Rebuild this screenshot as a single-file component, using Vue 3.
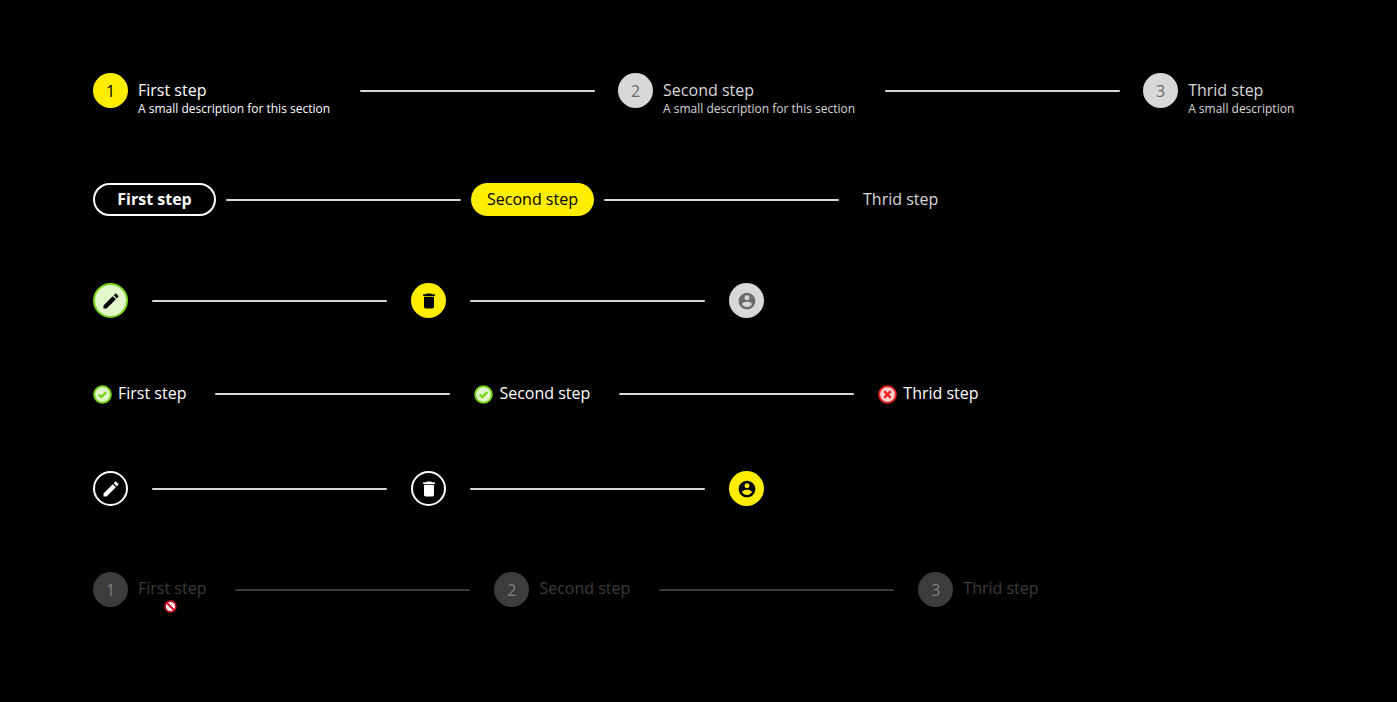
<script setup>
const icons = {
  edit: 'M3 17.25V21h3.75L17.81 9.94l-3.75-3.75L3 17.25zM20.71 7.04a1 1 0 0 0 0-1.41l-2.34-2.34a1 1 0 0 0-1.41 0l-1.83 1.83 3.75 3.75 1.83-1.83z',
  trash: 'M6 19c0 1.1.9 2 2 2h8c1.1 0 2-.9 2-2V7H6v12zM19 4h-3.5l-1-1h-5l-1 1H5v2h14V4z',
  account: 'M12 2C6.48 2 2 6.48 2 12s4.48 10 10 10 10-4.48 10-10S17.52 2 12 2zm0 3c1.66 0 3 1.34 3 3s-1.34 3-3 3-3-1.34-3-3 1.34-3 3-3zm0 14.2c-2.5 0-4.71-1.28-6-3.22.03-1.99 4-3.08 6-3.08 1.99 0 5.97 1.09 6 3.08-1.29 1.94-3.5 3.22-6 3.22z',
}

const steppers = [
  {
    kind: 'described',
    steps: [
      { number: 1, label: 'First step', text: 'A small description for this section', state: 'active' },
      { number: 2, label: 'Second step', text: 'A small description for this section', state: 'idle' },
      { number: 3, label: 'Thrid step', text: 'A small description', state: 'idle' },
    ],
  },
  {
    kind: 'pills',
    steps: [
      { label: 'First step', state: 'visited' },
      { label: 'Second step', state: 'active' },
      { label: 'Thrid step', state: 'idle' },
    ],
  },
  {
    kind: 'icons',
    steps: [
      { icon: 'edit', name: 'Edit', state: 'success' },
      { icon: 'trash', name: 'Delete', state: 'active' },
      { icon: 'account', name: 'Account', state: 'idle' },
    ],
  },
  {
    kind: 'status',
    steps: [
      { status: 'ok', label: 'First step', state: 'done' },
      { status: 'ok', label: 'Second step', state: 'done' },
      { status: 'error', label: 'Thrid step', state: 'done' },
    ],
  },
  {
    kind: 'icons',
    steps: [
      { icon: 'edit', name: 'Edit', state: 'visited' },
      { icon: 'trash', name: 'Delete', state: 'visited' },
      { icon: 'account', name: 'Account', state: 'active' },
    ],
  },
  {
    kind: 'disabled',
    steps: [
      { number: 1, label: 'First step', state: 'off', blocked: true },
      { number: 2, label: 'Second step', state: 'off' },
      { number: 3, label: 'Thrid step', state: 'off' },
    ],
  },
]
</script>

<template>
  <main class="board">
    <ol v-for="(stepper, row) in steppers" :key="row" class="stepper" :class="stepper.kind">
      <li v-for="(step, i) in stepper.steps" :key="i" class="item">
        <span v-if="i > 0" class="line"></span>
        <div class="step" :class="step.state">
          <span v-if="step.number" class="circle">{{ step.number }}</span>
          <span v-if="step.icon" class="circle">
            <svg class="glyph" viewBox="0 0 24 24" role="img" :aria-label="step.name">
              <path :d="icons[step.icon]" />
            </svg>
          </span>
          <svg v-if="step.status === 'ok'" class="badge" viewBox="0 0 19 19" aria-hidden="true">
            <circle cx="9.5" cy="9.5" r="8.3" fill="#e2f5cb" stroke="#78d51c" stroke-width="2" />
            <path d="M5.7 9.5l2.6 2.6 5-5" fill="none" stroke="#78d51c" stroke-width="2.4" />
          </svg>
          <svg v-if="step.status === 'error'" class="badge" viewBox="0 0 19 19" aria-hidden="true">
            <circle cx="9.5" cy="9.5" r="8.3" fill="#fbd3d3" stroke="#f02525" stroke-width="2" />
            <path d="M6.2 6.2l6.6 6.6M12.8 6.2l-6.6 6.6" fill="none" stroke="#f02525" stroke-width="2.6" />
          </svg>
          <div v-if="step.label" class="texts">
            <span class="label">{{ step.label }}</span>
            <span v-if="step.text" class="text">{{ step.text }}</span>
          </div>
          <svg v-if="step.blocked" class="blocked" viewBox="0 0 13 13" aria-hidden="true">
            <circle cx="6.5" cy="6.5" r="5.4" fill="#fff" stroke="#d0021b" stroke-width="1.6" />
            <path d="M3 3l7 7" stroke="#d0021b" stroke-width="1.8" />
          </svg>
        </div>
      </li>
    </ol>
  </main>
</template>

<style>
html,
body {
  margin: 0;
  background: #000;
}
</style>

<style scoped>
.board {
  display: flex;
  flex-direction: column;
  gap: 66px;
  box-sizing: border-box;
  min-height: 100vh;
  padding: 73px 32px 73px 93px;
  background: #000;
  color: #fff;
  font-family: 'Open Sans', 'Noto Sans', sans-serif;
  font-size: 16px;
  line-height: 20px;
}

.stepper {
  display: flex;
  margin: 0;
  padding: 0;
  list-style: none;
}

.item {
  display: flex;
  flex: 0 1 auto;
  align-items: flex-start;
}

.line {
  flex: 0 1 235px;
  width: 235px;
  min-width: 24px;
  height: 2px;
  margin: 17px 24px 0;
  border-radius: 1px;
  background: #d8d8d8;
}

.step {
  position: relative;
  display: flex;
  flex: none;
  align-items: flex-start;
  gap: 10px;
}

.circle {
  display: flex;
  align-items: center;
  justify-content: center;
  box-sizing: border-box;
  width: 35px;
  height: 35px;
  border-radius: 50%;
  background: #d8d8d8;
  color: #6b6b6b;
}

.glyph {
  width: 20px;
  height: 20px;
  fill: currentColor;
}

.active .circle {
  background: #ffed00;
  color: #000;
}

.success .circle {
  border: 2px solid #78d51c;
  background: #e2f5cb;
  color: #000;
}

.visited .circle {
  border: 2px solid #fff;
  background: #000;
  color: #fff;
}

.texts {
  display: flex;
  flex-direction: column;
}

.label,
.text {
  white-space: nowrap;
}

.text {
  font-size: 12px;
  line-height: 18px;
}

.idle .texts {
  color: #d8d8d8;
}

.described {
  height: 44px;
}

.described .texts {
  padding-top: 7px;
}

.described .line {
  margin: 17px 23px 0 30px;
}

.pills {
  min-height: 34px;
}

.pills .line {
  margin: 16px 10px 0;
}

.pills .texts {
  box-sizing: border-box;
  align-items: center;
  min-width: 123px;
  padding: 6px 14px 7px;
  border-radius: 17px;
}

.pills .idle .texts {
  align-items: flex-start;
}

.pills .visited .texts {
  padding: 4px 12px 5px;
  border: 2px solid #fff;
  font-weight: 700;
}

.pills .active .texts {
  background: #ffed00;
  color: #000;
}

.status .step {
  gap: 6px;
}

.status .label {
  line-height: 18px;
}

.status .line {
  margin: 9px 24px 0 29px;
}

.badge {
  width: 19px;
  height: 21px;
}

.disabled .texts {
  padding-top: 6px;
  color: #3c3c3c;
}

.disabled .circle {
  background: #3c3c3c;
  color: #808080;
}

.disabled .line {
  margin-left: 29px;
  background: #3c3c3c;
}

.blocked {
  position: absolute;
  top: 28px;
  left: 71px;
  width: 13px;
  height: 13px;
}
</style>
